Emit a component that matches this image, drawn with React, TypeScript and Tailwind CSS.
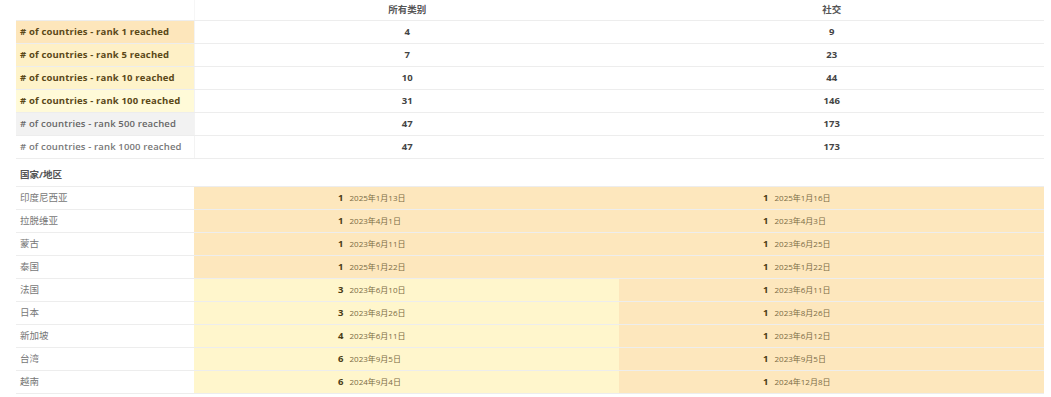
const FONT = { fontFamily: '"Open Sans", "Noto Sans CJK SC", sans-serif' };

type Summary = { rank: number; all: number; social: number; bg: string; text: string };

const SUMMARY: Summary[] = [
  { rank: 1, all: 4, social: 9, bg: 'bg-[#fde6bb]', text: 'text-[#5a4818] font-bold' },
  { rank: 5, all: 7, social: 23, bg: 'bg-[#fef0c6]', text: 'text-[#5a4818] font-bold' },
  { rank: 10, all: 10, social: 44, bg: 'bg-[#fef3ca]', text: 'text-[#5a4818] font-bold' },
  { rank: 100, all: 31, social: 146, bg: 'bg-[#fffad8]', text: 'text-[#5a4818] font-bold' },
  { rank: 500, all: 47, social: 173, bg: 'bg-[#f2f2f2]', text: 'text-[#666] font-semibold' },
  { rank: 1000, all: 47, social: 173, bg: 'bg-white', text: 'text-[#777] font-semibold' },
];

type Cell = { rank: number; date: string };
type Country = { name: string; all: Cell; social: Cell };

const COUNTRIES: Country[] = [
  { name: '印度尼西亚', all: { rank: 1, date: '2025年1月13日' }, social: { rank: 1, date: '2025年1月16日' } },
  { name: '拉脱维亚', all: { rank: 1, date: '2023年4月1日' }, social: { rank: 1, date: '2023年4月3日' } },
  { name: '蒙古', all: { rank: 1, date: '2023年6月11日' }, social: { rank: 1, date: '2023年6月25日' } },
  { name: '泰国', all: { rank: 1, date: '2025年1月22日' }, social: { rank: 1, date: '2025年1月22日' } },
  { name: '法国', all: { rank: 3, date: '2023年6月10日' }, social: { rank: 1, date: '2023年6月11日' } },
  { name: '日本', all: { rank: 3, date: '2023年8月26日' }, social: { rank: 1, date: '2023年8月26日' } },
  { name: '新加坡', all: { rank: 4, date: '2023年6月11日' }, social: { rank: 1, date: '2023年6月12日' } },
  { name: '台湾', all: { rank: 6, date: '2023年9月5日' }, social: { rank: 1, date: '2023年9月5日' } },
  { name: '越南', all: { rank: 6, date: '2024年9月4日' }, social: { rank: 1, date: '2024年12月8日' } },
];

// rank 1 gets the orange tint, rank 2-10 the pale yellow one
function cellBg(rank: number) {
  return rank === 1 ? 'bg-[#fde7bd]' : 'bg-[#fff6cc]';
}

const rowCls = 'flex h-[23px] items-center border-b border-[#ededed]';

function RankCell({ cell }: { cell: Cell }) {
  return (
    <div className={`flex h-full flex-1 items-center justify-center ${cellBg(cell.rank)}`}>
      <span className="w-[20px] text-right text-[9.5px] font-bold text-[#4a3c14]">{cell.rank}</span>
      <span className="ml-[6px] w-[140px] text-[8px] text-[#7a6b44]">{cell.date}</span>
    </div>
  );
}

export default function App() {
  return (
    <div className="h-[397px] w-[1051px] bg-white pl-4" style={FONT}>
      <div className="w-[1028px]">
        <div className="flex h-[20px] items-center">
          <div className="h-full w-[178px]" />
          <div className="flex h-full flex-1 items-center justify-center border-l border-[#f6f6f6] text-[9.5px] font-semibold text-[#555]">
            所有类别
          </div>
          <div className="flex h-full flex-1 items-center justify-center text-[9.5px] font-semibold text-[#555]">
            社交
          </div>
        </div>

        <div className="border-t border-[#ededed]">
          {SUMMARY.map((s) => (
            <div key={s.rank} className={rowCls}>
              <div className={`flex h-full w-[178px] items-center pl-1 text-[9.5px] tracking-[0.15px] ${s.bg} ${s.text}`}>
                # of countries - rank {s.rank} reached
              </div>
              <div className="flex h-full flex-1 items-center justify-center border-l border-[#f3f3f3] text-[9.5px] font-bold text-[#444]">
                {s.all}
              </div>
              <div className="flex h-full flex-1 items-center justify-center text-[9.5px] font-bold text-[#444]">
                {s.social}
              </div>
            </div>
          ))}
        </div>

        <div className="mt-[5px] flex h-[23px] items-center border-b border-[#ededed]">
          <div className="w-[178px] pl-1 text-[9.5px] font-bold text-[#555]">国家/地区</div>
        </div>

        {COUNTRIES.map((c) => (
          <div key={c.name} className={rowCls}>
            <div className="w-[178px] pl-1 text-[9.5px] text-[#777]">{c.name}</div>
            <RankCell cell={c.all} />
            <RankCell cell={c.social} />
          </div>
        ))}
      </div>
    </div>
  );
}
